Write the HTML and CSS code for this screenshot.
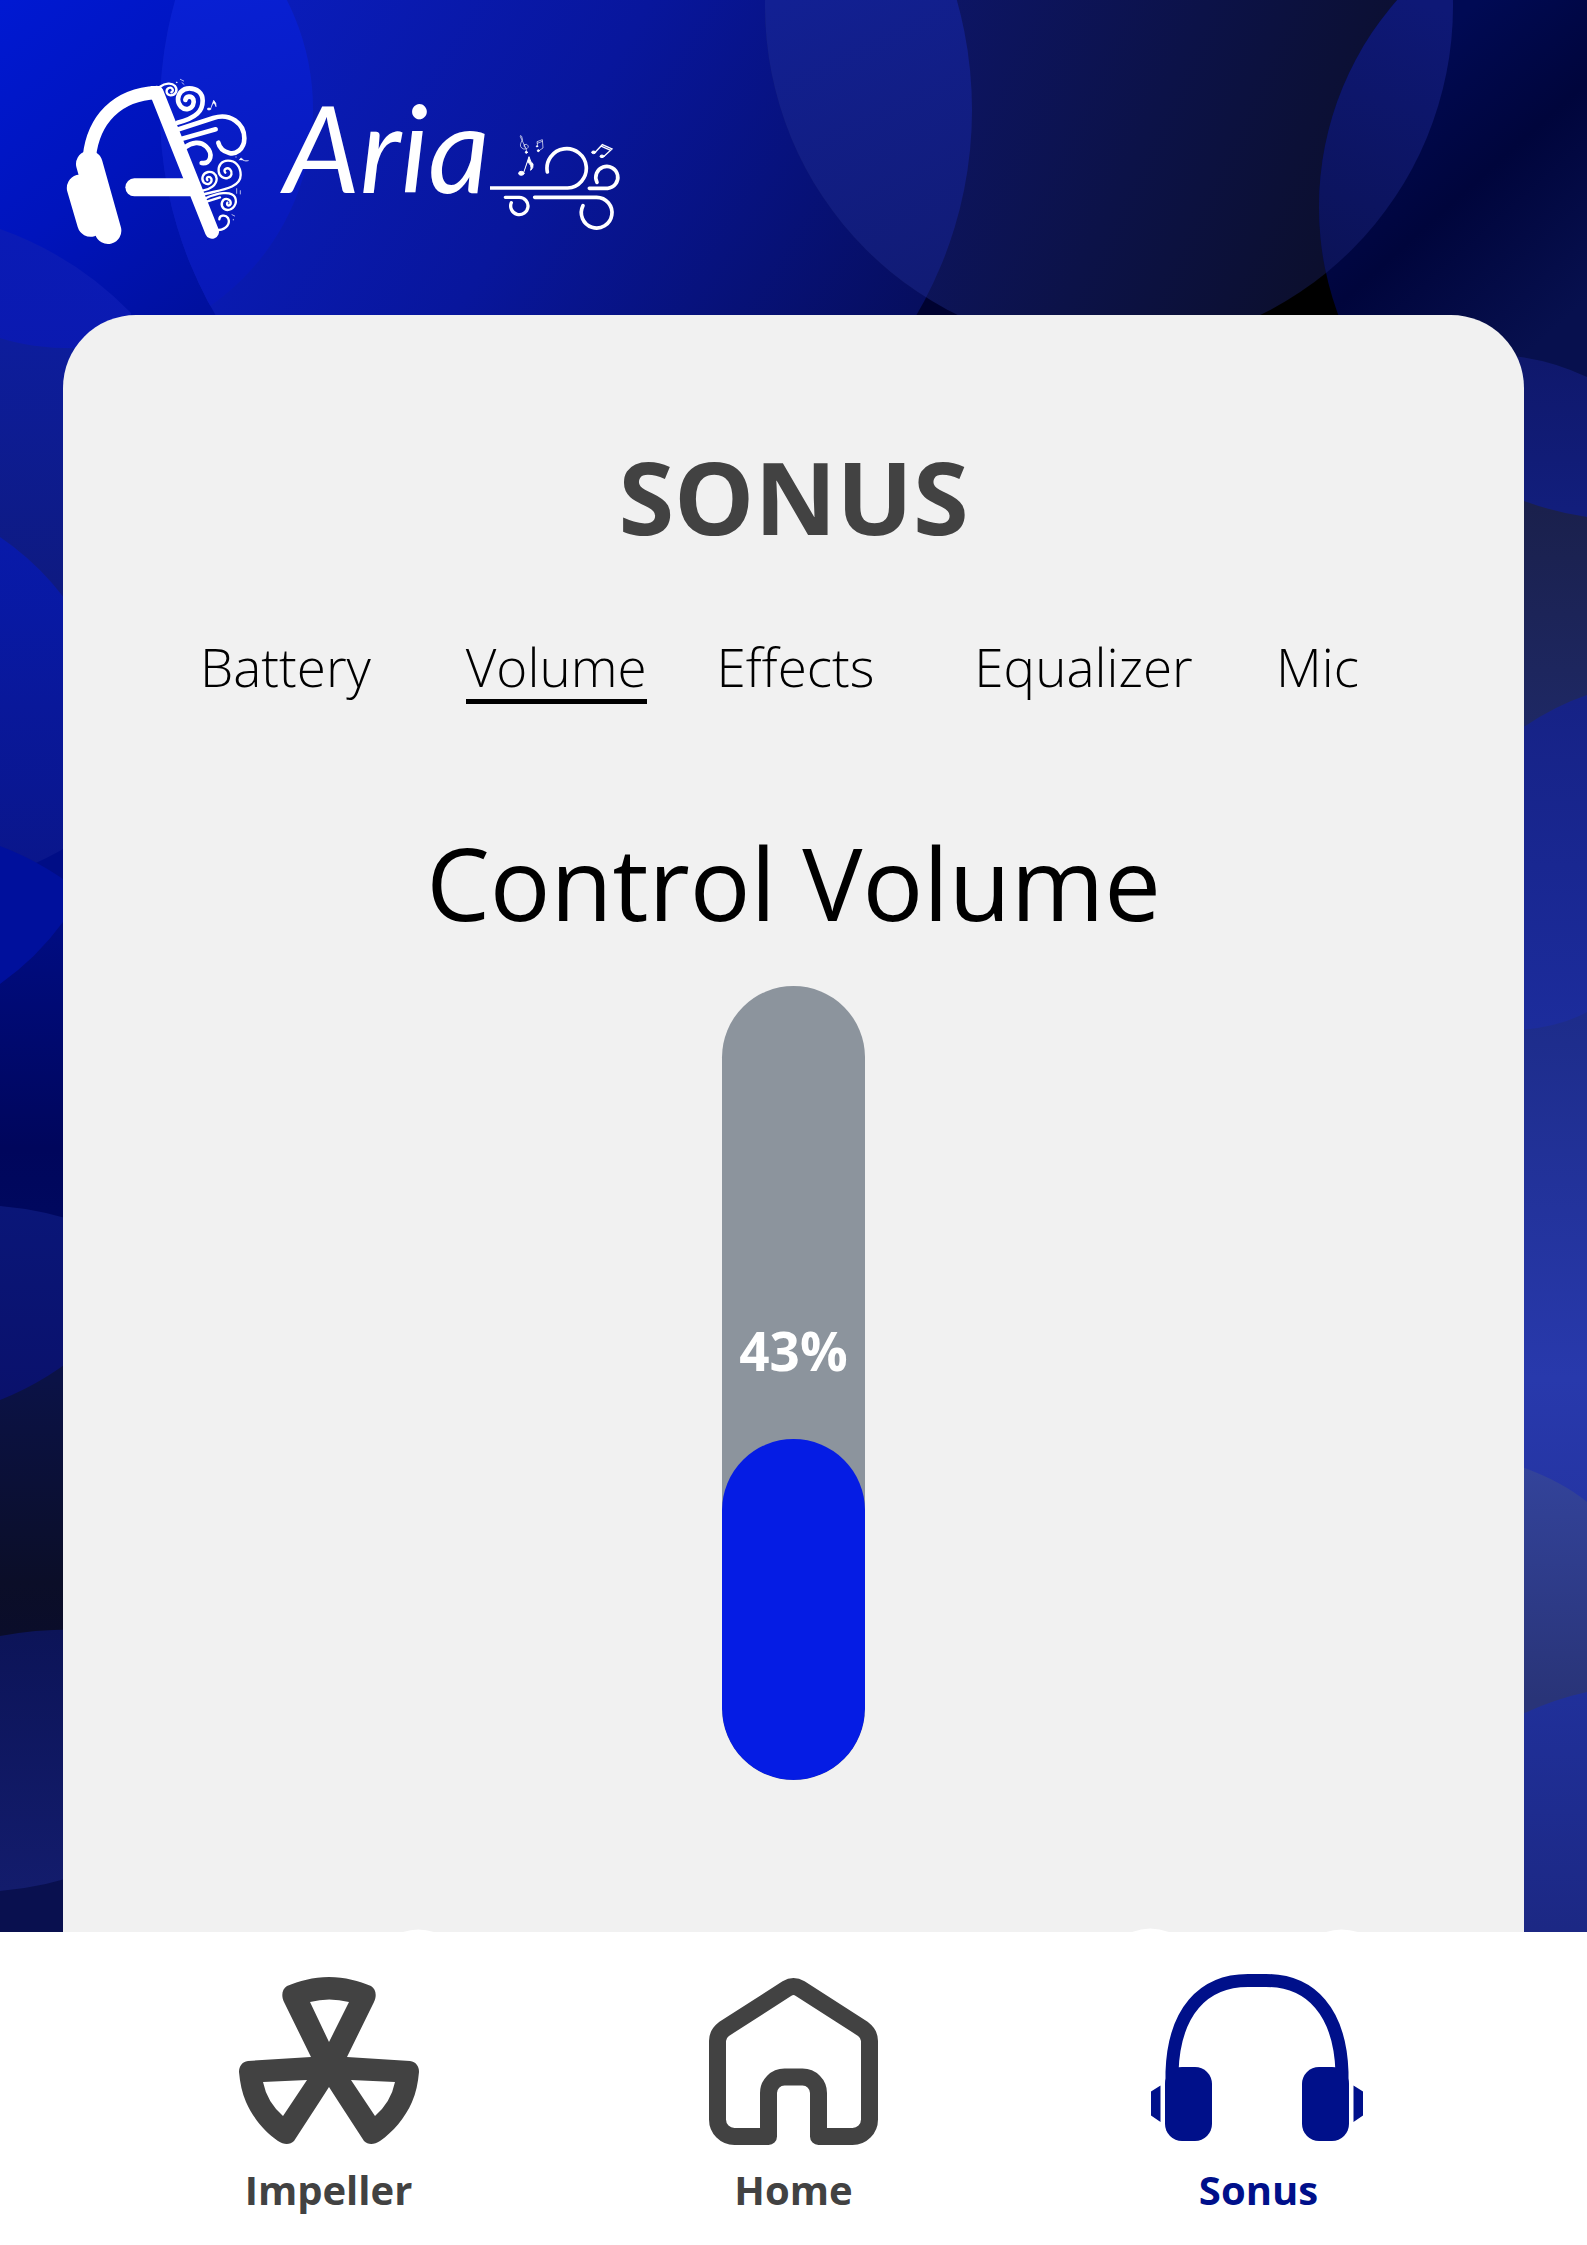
FILE: index.html
```html
<!DOCTYPE html>
<html lang="en">
<head>
<meta charset="utf-8">
<meta name="viewport" content="width=device-width, initial-scale=1">
<title>Aria - Sonus volume</title>
<link rel="stylesheet" href="styles.css">
</head>
<body>
<svg class="backdrop" viewBox="0 0 1587 2245" preserveAspectRatio="xMidYMin slice" aria-hidden="true">
  <defs>
    <linearGradient id="base" gradientUnits="userSpaceOnUse" x1="0" y1="0" x2="230" y2="290"><stop offset="0" stop-color="#0019d2"/><stop offset=".55" stop-color="#0014bc"/><stop offset="1" stop-color="#00109e"/></linearGradient>
    <linearGradient id="big" gradientUnits="userSpaceOnUse" x1="230" y1="0" x2="900" y2="420"><stop offset="0" stop-color="#0a1dbe"/><stop offset=".45" stop-color="#08169c"/><stop offset="1" stop-color="#060d58"/></linearGradient>
    <linearGradient id="lens" gradientUnits="userSpaceOnUse" x1="170" y1="0" x2="260" y2="300"><stop offset="0" stop-color="#0820d4"/><stop offset="1" stop-color="#0818b6"/></linearGradient>
    <linearGradient id="mid" gradientUnits="userSpaceOnUse" x1="850" y1="0" x2="1340" y2="230"><stop offset="0" stop-color="#0d1670"/><stop offset=".6" stop-color="#0c1248"/><stop offset="1" stop-color="#0c0f2e"/></linearGradient>
    <linearGradient id="mid2" gradientUnits="userSpaceOnUse" x1="780" y1="0" x2="920" y2="300"><stop offset="0" stop-color="#122093"/><stop offset="1" stop-color="#111b74"/></linearGradient>
    <linearGradient id="right" gradientUnits="userSpaceOnUse" x1="1390" y1="80" x2="1587" y2="300"><stop offset="0" stop-color="#000a54"/><stop offset=".45" stop-color="#00053c"/><stop offset="1" stop-color="#07104e"/></linearGradient>
    <linearGradient id="right2" gradientUnits="userSpaceOnUse" x1="1410" y1="0" x2="1330" y2="300"><stop offset="0" stop-color="#0e1876"/><stop offset="1" stop-color="#0b1254"/></linearGradient>
    <linearGradient id="l1" x2="0" y2="1"><stop offset="0" stop-color="#0a1bb6"/><stop offset="1" stop-color="#0b19ac"/></linearGradient>
    <linearGradient id="l2" gradientUnits="userSpaceOnUse" x1="0" y1="338" x2="0" y2="600"><stop offset="0" stop-color="#0d1d9c"/><stop offset="1" stop-color="#0e1a80"/></linearGradient>
    <linearGradient id="l3" gradientUnits="userSpaceOnUse" x1="0" y1="537" x2="0" y2="877"><stop offset="0" stop-color="#081aaa"/><stop offset="1" stop-color="#0a168a"/></linearGradient>
    <linearGradient id="l5" gradientUnits="userSpaceOnUse" x1="0" y1="900" x2="0" y2="1210"><stop offset="0" stop-color="#000d86"/><stop offset=".8" stop-color="#00065c"/><stop offset="1" stop-color="#00085e"/></linearGradient>
    <linearGradient id="l6" gradientUnits="userSpaceOnUse" x1="0" y1="1206" x2="0" y2="1400"><stop offset="0" stop-color="#0a1678"/><stop offset="1" stop-color="#0a116c"/></linearGradient>
    <linearGradient id="l7" gradientUnits="userSpaceOnUse" x1="0" y1="1380" x2="0" y2="1634"><stop offset="0" stop-color="#0b1246"/><stop offset=".8" stop-color="#0b0e28"/><stop offset="1" stop-color="#0a0d2a"/></linearGradient>
    <linearGradient id="l8" gradientUnits="userSpaceOnUse" x1="0" y1="1630" x2="0" y2="1890"><stop offset="0" stop-color="#0c1458"/><stop offset="1" stop-color="#131c6c"/></linearGradient>
    <linearGradient id="r1" gradientUnits="userSpaceOnUse" x1="0" y1="357" x2="0" y2="510"><stop offset="0" stop-color="#0f186c"/><stop offset="1" stop-color="#121e7c"/></linearGradient>
    <linearGradient id="r2" gradientUnits="userSpaceOnUse" x1="0" y1="502" x2="0" y2="726"><stop offset="0" stop-color="#1a204c"/><stop offset="1" stop-color="#1e2864"/></linearGradient>
    <linearGradient id="r3" gradientUnits="userSpaceOnUse" x1="0" y1="700" x2="0" y2="1030"><stop offset="0" stop-color="#162286"/><stop offset="1" stop-color="#1c2c9c"/></linearGradient>
    <linearGradient id="r4" gradientUnits="userSpaceOnUse" x1="0" y1="1012" x2="0" y2="1500"><stop offset="0" stop-color="#1d2c8a"/><stop offset=".75" stop-color="#2839ac"/><stop offset="1" stop-color="#2535a4"/></linearGradient>
    <linearGradient id="r5" gradientUnits="userSpaceOnUse" x1="0" y1="1469" x2="0" y2="1700"><stop offset="0" stop-color="#33439a"/><stop offset="1" stop-color="#293478"/></linearGradient>
    <linearGradient id="r6" gradientUnits="userSpaceOnUse" x1="0" y1="1692" x2="0" y2="1931"><stop offset="0" stop-color="#20309a"/><stop offset="1" stop-color="#1c2884"/></linearGradient>
    <clipPath id="clipBig"><circle cx="566" cy="110" r="406"/></clipPath>
    <clipPath id="clipMid"><circle cx="1109" cy="6" r="344"/></clipPath>
  </defs>
  <rect width="600" height="2245" fill="url(#base)"/>
  <rect x="800" width="300" height="400" fill="#000230"/>
  <rect x="1100" width="487" height="400" fill="#000"/>
  <circle cx="566" cy="110" r="406" fill="url(#big)"/>
  <circle cx="73" cy="109" r="240" fill="url(#lens)" clip-path="url(#clipBig)"/>
  <circle cx="1109" cy="6" r="344" fill="url(#mid)"/>
  <circle cx="566" cy="110" r="406" fill="url(#mid2)" clip-path="url(#clipMid)"/>
  <circle cx="1632" cy="207" r="313" fill="url(#right)"/>
  <circle cx="1632" cy="207" r="313" fill="url(#right2)" clip-path="url(#clipMid)"/>
  <path d="M0 229A344 344 0 0 1 131 313V420H0Z" fill="url(#l1)"/>
  <path d="M0 338Q36 350 90 348V700H0Z" fill="url(#l2)"/>
  <path d="M0 537A273 273 0 0 1 90 640V1000H0Z" fill="url(#l3)"/>
  <path d="M0 877A344 344 0 0 0 90 832V1300H0Z" fill="url(#l5)"/>
  <path d="M0 846A297 297 0 0 1 90 900L63 922A273 273 0 0 1 0 984Z" fill="#00109c"/>
  <path d="M0 1206A343 343 0 0 1 90 1226V1500H0Z" fill="url(#l6)"/>
  <path d="M0 1400A297 297 0 0 0 90 1344V1700H0Z" fill="url(#l7)"/>
  <path d="M0 1636A400 400 0 0 1 90 1630V2000H0Z" fill="url(#l8)"/>
  <path d="M0 1891A343 343 0 0 0 90 1871V2245H0Z" fill="#09104f"/>
  <path d="M1500 355Q1545 357 1587 377V2245H1500Z" fill="url(#r1)"/>
  <path d="M1500 491A313 313 0 0 0 1587 517V2245H1500Z" fill="url(#r2)"/>
  <path d="M1500 744Q1545 709 1587 695V2245H1500Z" fill="url(#r3)"/>
  <path d="M1500 1031Q1555 1030 1587 1012V2245H1500Z" fill="url(#r4)"/>
  <path d="M1500 1460Q1555 1476 1587 1502V2245H1500Z" fill="url(#r5)"/>
  <path d="M1500 1725Q1545 1701 1587 1692V2245H1500Z" fill="url(#r6)"/>
</svg>

<header class="brand">
  <svg class="brand-mark" viewBox="45 45 555 513" aria-hidden="true" fill="none" stroke="#fff" stroke-linecap="round">
    <path d="M118 290C130 180 200 103 320 98" stroke-width="40"/>
    <path d="M320 98L486 515" stroke-width="42"/>
    <path d="M302 78H328L340 100H300Z" fill="#fff" stroke="none"/>
    <path d="M253 382H420" stroke-width="54"/>
    <path d="M118 312L174 512" stroke-width="80"/>
    <path d="M91 384L122 490" stroke-width="81"/>
    <g stroke-width="14">
      <path d="M382 188C440 174 458 152 458 122C458 98 440 85 418 85C396 85 384 102 384 118C384 136 398 150 414 147C428 144 434 130 430 118C424 106 408 108 406 120"/>
      <path d="M386 208L490 174C540 158 583 190 583 235C583 270 555 284 538 279C520 274 508 262 505 248"/>
      <path d="M396 236L497 208"/>
      <path d="M405 262C425 246 452 243 468 259C490 280 484 313 455 309"/>
    </g>
    <g stroke-width="7">
      <path d="M330 80C345 70 365 67 375 78C386 92 375 106 362 106C348 104 346 90 356 84C366 80 374 92 364 97"/>
      <path d="M464 402C510 390 572 385 572 345C572 318 556 302 534 302C514 302 504 318 506 334C508 350 522 357 533 354C546 350 548 336 540 328C530 320 518 330 526 338"/>
      <path d="M458 392C480 388 500 375 500 356C498 340 486 334 474 336C458 340 452 356 462 368C474 378 488 368 484 356C478 346 466 352 472 360"/>
      <path d="M466 415C500 400 544 390 555 412C564 432 548 450 532 450C516 448 510 432 520 420C530 412 544 420 542 432C538 440 528 436 532 428"/>
      <path d="M470 425L510 412M506 510C530 508 542 490 534 474C526 462 508 466 508 478"/>
    </g>
    <g fill="#fff" stroke-width="2">
      <ellipse cx="477" cy="147" rx="5" ry="3"/><path d="M482 146L491 121Q500 130 498 140Q497 131 490 129"/>
      <circle cx="380" cy="67" r="1"/><path d="M391 58L401 63M396 68L402 73M558 290V292M568 300Q572 290 578 298T595 302M560 386V400M571 392V402M546 464L554 468M550 478V480"/>
    </g>
  </svg>
  <span class="brand-name">Aria</span>
  <svg class="brand-wind" viewBox="645 210 405 315" aria-hidden="true" fill="none" stroke="#fff" stroke-width="11" stroke-linecap="round">
    <path d="M640 384H878A59 59 0 1 0 817 336"/>
    <path d="M943 385H998A33 33 0 1 0 966 367"/>
    <path d="M691 412H733A26 26 0 1 1 709 428" stroke-width="10"/>
    <path d="M779 412H965A46 46 0 1 1 924 437"/>
    <g stroke-width="3" fill="#fff">
      <ellipse cx="739" cy="340" rx="8" ry="6"/>
      <path d="M746 338L762 290Q766 306 774 312Q776 324 767 331Q772 316 758 306" />
      <ellipse cx="956" cy="277" rx="6" ry="4"/><ellipse cx="981" cy="289" rx="6" ry="4"/>
      <path d="M962 275L982 254L1011 267L988 288M980 259L1007 271" fill="none" stroke-width="4"/>
      <circle cx="786" cy="259" r="2"/><circle cx="790" cy="272" r="3"/>
      <path d="M788 258L786 245L802 239L804 264L792 272M787 250L802 244" fill="none" stroke-width="2"/>
      <path d="M754 277V268L736 230Q735 224 740 229Q746 240 738 248Q732 262 746 267Q760 268 760 258Q756 250 748 254Q744 260 750 262" fill="none" stroke-width="2"/>
      <circle cx="754" cy="277" r="3"/>
    </g>
  </svg>
</header>

<main class="card">
  <h1 class="card-title">SONUS</h1>
  <nav class="tabs" aria-label="Sonus settings">
    <a href="#battery">Battery</a>
    <a href="#volume" class="is-current" aria-current="page">Volume</a>
    <a href="#effects">Effects</a>
    <a href="#equalizer">Equalizer</a>
    <a href="#mic">Mic</a>
  </nav>
  <label class="volume-label" for="volume">Control Volume</label>
  <div class="volume">
    <div class="volume-fill" style="height: 43%"></div>
    <output class="volume-value" for="volume" style="bottom: 43%">43%</output>
    <input class="volume-input" id="volume" type="range" min="0" max="100" value="43">
  </div>
</main>

<nav class="dock" aria-label="Main">
  <svg class="dock-bumps" viewBox="0 0 956 4" aria-hidden="true" fill="#fff">
    <path d="M0 4Q15-1 31 4ZM729 4Q747-3 766 4ZM923 4Q938-1 955 4Z"/>
  </svg>
  <a class="dock-link" href="#impeller">
    <svg width="180" height="167" viewBox="0 0 180 167" aria-hidden="true"><path fill="#424242" fill-rule="evenodd" d="M90 0C106 0 120 4 132 9C137 12 138 19 135 25L108 80L171 84C177 85 180 89 180 95C179 106 177 116 173 125C166 141 154 155 141 164C135 168 129 168 125 164L99 124L90 110L81 124L55 164C51 168 45 168 39 164C26 155 14 141 7 125C3 116 1 106 0 95C0 89 3 85 9 84L72 80L45 25C42 19 43 12 48 9C60 4 74 0 90 0ZM71 25L90 65L110 25Q90 20 71 25ZM24 105Q28 125 44 139L68 103ZM156 105L112 103L136 139Q152 125 156 105Z"/></svg>
    <span>Impeller</span>
  </a>
  <a class="dock-link" href="#home">
    <svg width="169" height="167" viewBox="0 0 169 167" aria-hidden="true"><path fill="none" stroke="#424242" stroke-width="17" stroke-linejoin="round" d="M8.500 64V142.500A17 17 0 0 0 25.500 159.500H59.500V116A16 16 0 0 1 75.500 100H93.500A16 16 0 0 1 109.500 116V159.500H143.500A17 17 0 0 0 160.500 142.500V64Q160.500 57 154 52L91 11.500Q84.500 7.500 78 11.500L15 52Q8.500 57 8.500 64Z"/></svg>
    <span>Home</span>
  </a>
  <a class="dock-link is-active" href="#sonus" aria-current="page">
    <svg width="212" height="167" viewBox="2 3 212 167" aria-hidden="true" fill="#00108a"><path fill="none" stroke="#00108a" stroke-width="13" d="M21 110V98C23 38 52 6.500 97 6.500H115C160 6.500 189 38 191 98V110"/><rect x="14" y="93" width="47" height="74" rx="17"/><rect x="151" y="93" width="47" height="74" rx="17"/><path d="M9.500 111.500V148L0 141.500V117.500ZM202.500 111.500V148L212 141.500V117.500Z"/></svg>
    <span>Sonus</span>
  </a>
</nav>
</body>
</html>
```
FILE: styles.css
```css
* {
  box-sizing: border-box;
}

body {
  position: relative;
  display: flex;
  flex-direction: column;
  min-height: 100vh;
  margin: 0;
  overflow-x: hidden;
  background: #09104f;
  color: #000;
  font-family: "Open Sans", "Noto Sans", sans-serif;
}

a {
  color: inherit;
  text-decoration: none;
}

/* Overlapping circles behind the whole page */
.backdrop {
  position: absolute;
  inset: 0;
  z-index: -1;
  width: 100%;
  height: 100%;
}

/* Logo row */
.brand {
  display: flex;
  align-items: flex-start;
  padding: 75px 65px 69px;
}

.brand-mark {
  width: 185px;
  height: 171px;
}

.brand-name {
  flex: 0 0 201px;
  margin-left: 34px;
  color: #fff;
  font-family: Lato, sans-serif;
  font-size: 120px;
  font-style: italic;
  font-weight: 400;
  line-height: 144px;
}

.brand-wind {
  width: 135px;
  height: 105px;
  margin-top: 55px;
}

/* Main panel */
.card {
  display: flex;
  flex: 1;
  flex-direction: column;
  align-items: center;
  margin: 0 63px;
  padding: 121px 136px 151px;
  border-radius: 73px 73px 0 0;
  background: #f1f1f1;
}

.card-title {
  margin: 0;
  color: #424242;
  font-size: 101px;
  font-weight: 700;
  line-height: 120px;
}

.tabs {
  display: grid;
  grid-template-columns: 266fr 251fr 258fr 302fr 112fr;
  justify-items: start;
  width: 100%;
  margin-top: 79px;
  padding-left: 1px;
  font-size: 53px;
  font-weight: 300;
  line-height: 64px;
}

.tabs a {
  border-bottom: 5px solid transparent;
}

.tabs .is-current {
  border-color: #000;
}

.volume-label {
  margin-top: 118px;
  font-size: 101px;
  line-height: 120px;
}

.volume {
  position: relative;
  display: flex;
  flex-direction: column;
  justify-content: flex-end;
  width: 143px;
  height: 794px;
  margin-top: 44px;
  overflow: hidden;
  border-radius: 72px;
  background: #8c949d;
}

.volume-fill {
  border-radius: 72px;
  background: #051ce4;
}

.volume-value {
  position: absolute;
  left: 0;
  width: 100%;
  padding-bottom: 52px;
  color: #fff;
  font-size: 53px;
  font-weight: 700;
  line-height: 72px;
  text-align: center;
}

.volume-input {
  position: absolute;
  inset: 0;
  width: 100%;
  height: 100%;
  margin: 0;
  appearance: none;
  background: transparent;
  cursor: pointer;
  direction: rtl;
  writing-mode: vertical-lr;
}

.volume-input::-webkit-slider-thumb {
  appearance: none;
  width: 143px;
  height: 143px;
  background: transparent;
}

/* Bottom navigation */
.dock {
  position: relative;
  display: grid;
  grid-template-columns: repeat(3, 1fr);
  padding: 45px 96px 31px;
  background: #fff;
  color: #424242;
  font-size: 40px;
  font-weight: 700;
  line-height: 48px;
}

.dock-bumps {
  position: absolute;
  bottom: 100%;
  left: 403px;
  width: 956px;
  height: 4px;
}

.dock-link {
  display: flex;
  flex-direction: column;
  align-items: center;
  gap: 22px;
}

.dock-link svg {
  overflow: visible;
}

.dock-link.is-active {
  color: #00108a;
}
```
